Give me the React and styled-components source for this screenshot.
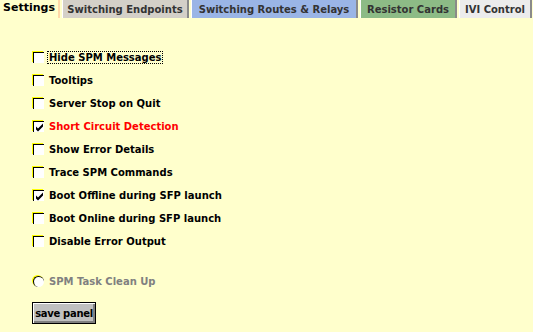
import styled, { createGlobalStyle } from "styled-components";

const GlobalStyle = createGlobalStyle`
  html, body {
    margin: 0;
    padding: 0;
    background: #ffffcc;
  }
  body {
    font-family: Tahoma, "DejaVu Sans", "Liberation Sans", sans-serif;
  }
`;

const tabs = [
  { label: "Settings", bg: "#ffffcc", width: 60, active: true },
  { label: "Switching Endpoints", bg: "#d4d0c8", width: 127 },
  { label: "Switching Routes & Relays", bg: "#9ab5e6", width: 167 },
  { label: "Resistor Cards", bg: "#8dbb86", width: 97 },
  { label: "IVI Control", bg: "#ececec", width: 73 },
];

const options = [
  { label: "Hide SPM Messages", focused: true },
  { label: "Tooltips" },
  { label: "Server Stop on Quit" },
  { label: "Short Circuit Detection", checked: true, red: true },
  { label: "Show Error Details" },
  { label: "Trace SPM Commands" },
  { label: "Boot Offline during SFP launch", checked: true },
  { label: "Boot Online during SFP launch" },
  { label: "Disable Error Output" },
];

export default function App() {
  return (
    <Page>
      <GlobalStyle />
      <TabBar>
        {tabs.map((t) => (
          <Tab key={t.label} $bg={t.bg} $w={t.width} $active={t.active}>
            {t.label}
          </Tab>
        ))}
      </TabBar>
      <Panel>
        <Options>
          {options.map((o) => (
            <Row key={o.label}>
              <Box>
                {o.checked && (
                  <svg width="9" height="9" viewBox="0 0 9 9">
                    <path d="M1 3.5 L3 5.5 L8 0.5 L8 3.5 L3 8.5 L1 6.5 Z" fill="#000" />
                  </svg>
                )}
              </Box>
              <Label $red={o.red} $focused={o.focused}>
                {o.label}
              </Label>
            </Row>
          ))}
        </Options>
        <RadioRow>
          <Radio />
          <Label $muted>SPM Task Clean Up</Label>
        </RadioRow>
        <SaveButton>save panel</SaveButton>
      </Panel>
    </Page>
  );
}

const Page = styled.div`
  width: 533px;
  height: 332px;
  background: #ffffcc;
  overflow: hidden;
`;

const TabBar = styled.div`
  display: flex;
  gap: 2px;
  height: 19px;
`;

const Tab = styled.div`
  width: ${(p) => p.$w}px;
  height: 18px;
  flex: none;
  display: flex;
  align-items: center;
  justify-content: center;
  background: ${(p) => p.$bg};
  border-right: 2px solid ${(p) => (p.$active ? "#ffd8a8" : "#8a8a8a")};
  border-left: ${(p) => (p.$active ? "none" : "1px solid #ffffff")};
  box-sizing: border-box;
  padding-bottom: ${(p) => (p.$active ? "3px" : "0")};
  font-size: ${(p) => (p.$active ? "11px" : "10px")};
  font-weight: bold;
  color: ${(p) => (p.$active ? "#000" : "#333")};
  white-space: nowrap;
`;

const Panel = styled.div`
  display: flex;
  flex-direction: column;
  padding: 31px 0 0 32px;
`;

const Options = styled.div`
  display: flex;
  flex-direction: column;
  gap: 8px;
`;

const Row = styled.div`
  display: flex;
  align-items: center;
  gap: 4px;
  height: 15px;
`;

const Box = styled.div`
  width: 11px;
  height: 11px;
  margin-left: 1px;
  box-sizing: border-box;
  background: #fff;
  border-top: 1px solid #000;
  border-left: 1px solid #000;
  box-shadow: -1px -1px 0 #ffff00;
  display: flex;
  align-items: center;
  justify-content: center;
`;

const Label = styled.span`
  font-size: 10px;
  font-weight: bold;
  color: ${(p) => (p.$red ? "#ff0000" : p.$muted ? "#808080" : "#000")};
  padding: 0 1px;
  outline: ${(p) => (p.$focused ? "1px dotted #000" : "none")};
  white-space: nowrap;
`;

const RadioRow = styled.div`
  display: flex;
  align-items: center;
  gap: 4px;
  height: 15px;
  margin-top: 25px;
`;

const Radio = styled.div`
  width: 11px;
  height: 11px;
  margin-left: 1px;
  border-radius: 50%;
  background: #fff;
  box-sizing: border-box;
  border-top: 1px solid #000;
  border-left: 1px solid #000;
  box-shadow: -1px -1px 0 #ffff00;
`;

const SaveButton = styled.button`
  align-self: flex-start;
  margin-top: 13px;
  width: 64px;
  height: 22px;
  padding: 0;
  background: #c0c0c0;
  border: 1px solid #000;
  box-shadow: inset 1px 1px 0 #ffffff, inset -2px -2px 0 #808080;
  font-family: Tahoma, "DejaVu Sans", "Liberation Sans", sans-serif;
  font-size: 10px;
  letter-spacing: -0.3px;
  font-weight: bold;
  color: #000;
`;
